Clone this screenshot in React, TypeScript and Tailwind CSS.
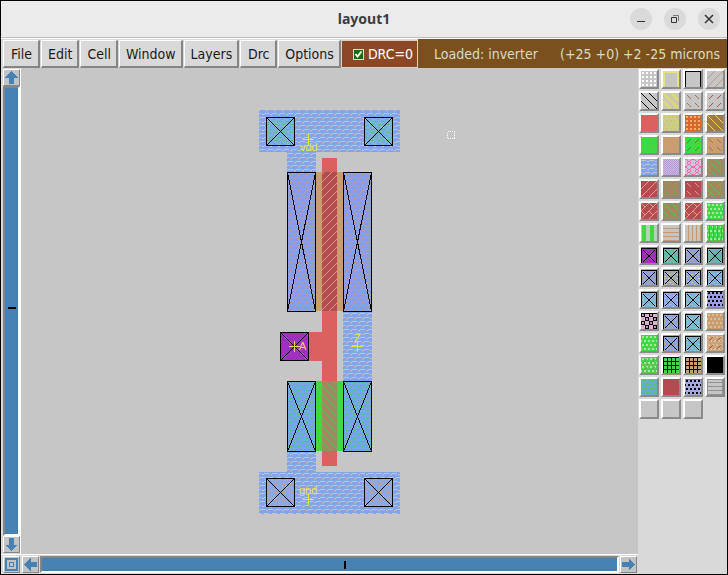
import type { ReactNode } from "react";

const MENUS = ["File", "Edit", "Cell", "Window", "Layers", "Drc", "Options"];

type Layer = { name: string; bg: string; fills?: string[]; box?: boolean; frame?: string; edge?: string; thick?: boolean };

const LAYERS: Layer[] = [
  { name: "Grid dots", bg: "#c6c6c6", fills: ["dots-white"] },
  { name: "Highlight", bg: "#c6c6c6", frame: "#e8e27c", thick: true },
  { name: "Outline", bg: "#c6c6c6", frame: "#000" },
  { name: "P select", bg: "#c6c6c6", fills: ["fwd-tan"] },

  { name: "Error", bg: "#c6c6c6", fills: ["back-black"] },
  { name: "N well hint", bg: "#c8c8b0", fills: ["back-khaki"] },
  { name: "Back dashes", bg: "#c6c6c6", fills: ["dash-back-brown"] },
  { name: "Forward dashes", bg: "#c6c6c6", fills: ["dash-fwd-red"] },

  { name: "Polysilicon", bg: "#db6060" },
  { name: "Poly 2", bg: "#cdcd85", fills: ["dots-khaki"] },
  { name: "Poly contact", bg: "#d8672a", fills: ["dots-peach"] },
  { name: "Poly resistor", bg: "#a07a45", fills: ["back-yellow"] },

  { name: "N diffusion", bg: "#42d843" },
  { name: "P diffusion", bg: "#c99d70" },
  { name: "N well contact", bg: "#42d843", fills: ["dash-fwd-brown"] },
  { name: "P well contact", bg: "#c99d70", fills: ["dash-back-brown"] },

  { name: "Metal 1", bg: "#82a5eb", fills: ["metal"] },
  { name: "Metal 2", bg: "#cdbbd3", fills: ["checker"] },
  { name: "Metal 3", bg: "#d8c0d0", fills: ["rings"] },
  { name: "N transistor", bg: "#a38662", fills: ["back-green"] },

  { name: "P transistor", bg: "#b54a52", fills: ["fwd-peach"] },
  { name: "N transistor high", bg: "#a38662", fills: ["dash-fwd-green"] },
  { name: "P transistor high", bg: "#b54a52", fills: ["dash-back-peach"] },
  { name: "N transistor low", bg: "#a38662", fills: ["back-green", "dash-fwd-green"] },

  { name: "P transistor low", bg: "#b54a52", fills: ["fwd-peach", "short-back-peach"] },
  { name: "N memory", bg: "#a38662", fills: ["back-green", "dash-fwd-green"] },
  { name: "P memory", bg: "#b54a52", fills: ["fwd-peach", "short-back-peach"] },
  { name: "N substrate", bg: "#42d843", fills: ["dots-mint"] },

  { name: "N stripes", bg: "#b4d3b4", fills: ["stripes-green"] },
  { name: "P rows", bg: "#c9c4be", fills: ["rows-tan"] },
  { name: "P columns", bg: "#c9c4be", fills: ["cols-tan"] },
  { name: "N substrate columns", bg: "#42d843", fills: ["dots-mint", "cols-brown"] },

  { name: "Poly metal contact", bg: "#a030b8", box: true, edge: "#c060d0" },
  { name: "N diffusion contact", bg: "#6db7b0", fills: ["flecks-green"], box: true, edge: "#68b890" },
  { name: "P diffusion contact", bg: "#8ea2d8", fills: ["flecks-tan"], box: true, edge: "#a8a0b8" },
  { name: "N substrate contact", bg: "#72aebb", fills: ["flecks-green"], box: true, edge: "#68b870" },

  { name: "P substrate contact", bg: "#8ea2d8", fills: ["flecks-tan"], box: true, edge: "#b8a890" },
  { name: "Buried contact", bg: "#9fa8b4", fills: ["flecks-tan", "flecks-yellow"], box: true, edge: "#d0a050" },
  { name: "Cap contact", bg: "#8ba7d8", fills: ["flecks-yellow"], box: true, edge: "#d8d080" },
  { name: "Well contact", bg: "#80aadb", fills: ["flecks-aqua"], box: true, edge: "#98d0c0" },

  { name: "Via N", bg: "#83b3dd", fills: ["flecks-aqua"], box: true, edge: "#80c8a0" },
  { name: "Via 1", bg: "#88a8ea", fills: ["flecks-light"], box: true, edge: "#a0b8e8" },
  { name: "Via 2", bg: "#80b3d8", fills: ["flecks-aqua"], box: true, edge: "#80d0a0" },
  { name: "Metal via", bg: "#9c9ce5", fills: ["dots-black"], edge: "#000" },

  { name: "Metal 3 via", bg: "#dfaed2", fills: ["blocks-black"], edge: "#000" },
  { name: "Via P", bg: "#8ea6df", fills: ["flecks-tan"], box: true, edge: "#c0b8a8" },
  { name: "Via substrate", bg: "#79b9d5", fills: ["flecks-aqua"], box: true, edge: "#80d8a0" },
  { name: "P substrate", bg: "#c99d70", fills: ["dots-sand"] },

  { name: "N field", bg: "#42d843", fills: ["dots-mint"] },
  { name: "P field contact", bg: "#86a3e3", fills: ["flecks-tan"], box: true, edge: "#b0a090" },
  { name: "N field contact", bg: "#79b5d3", fills: ["flecks-aqua"], box: true, edge: "#80c890" },
  { name: "P field", bg: "#cda37c", fills: ["dots-sand", "dash-fwd-brown"] },

  { name: "N field rail", bg: "#50cf4d", fills: ["dots-mint", "dash-fwd-tan"] },
  { name: "N mesh", bg: "#42d843", fills: ["mesh-black"], edge: "#000" },
  { name: "P mesh", bg: "#c99d70", fills: ["mesh-black"], edge: "#000" },
  { name: "Pad", bg: "#000" },

  { name: "Metal on N", bg: "#69a9d5", fills: ["metal-green"] },
  { name: "Fill poly", bg: "#b54a52" },
  { name: "Glass", bg: "#a4a6dd", fills: ["dots-black"], edge: "#70709a" },
  { name: "Lines", bg: "#c6c6c6", fills: ["rows-gray"], frame: "#929292" },

  { name: "Spare 1", bg: "#c6c6c6" },
  { name: "Spare 2", bg: "#c6c6c6" },
  { name: "Spare 3", bg: "#c6c6c6" },
];

function Tile({ id, w, h = w, children }: { id: string; w: number; h?: number; children: ReactNode }) {
  return (
    <pattern id={id} width={w} height={h} patternUnits="userSpaceOnUse">
      {children}
    </pattern>
  );
}

function Dots({ id, color }: { id: string; color: string }) {
  return (
    <Tile id={id} w={4}>
      <rect x="1" y="1" width="2" height="2" fill={color} />
    </Tile>
  );
}

function StaggeredDots({ id, color }: { id: string; color: string }) {
  return (
    <Tile id={id} w={8}>
      <path d="M1 1h2v2h-2zM5 1h2v2h-2zM3 5h2v2h-2zM7 5h1v2h-1zM0 5h1v2h-1z" fill={color} />
    </Tile>
  );
}

// One-pixel stair steps; the dashed form leaves out part of each run.
const steps = (size: number, forward: boolean, from: number, to: number) =>
  Array.from({ length: to - from }, (_, i) => {
    const x = from + i;
    const y = forward ? size - 1 - x : x;
    return `M${x} ${y}h1v1h-1z`;
  }).join("");

const CROSS = Array.from({ length: 12 }, (_, i) => `M${2 + i} ${3 + i}h1v1h-1zM${13 - i} ${3 + i}h1v1h-1z`).join("");

type DiagonalProps = { id: string; color: string; forward?: boolean; from?: number; to?: number; size?: number };

function Diagonal({ id, color, forward = false, size = 8, from = 0, to = size }: DiagonalProps) {
  return (
    <Tile id={id} w={size}>
      <path d={steps(size, forward, from, to)} fill={color} />
    </Tile>
  );
}

function Flecks({ id, color }: { id: string; color: string }) {
  return (
    <Tile id={id} w={8}>
      <path d="M0 1h2v1h-2zM5 1h3v1h-3zM2 4h3v1h-3zM6 5h2v1h-2zM1 7h2v1h-2z" fill={color} />
    </Tile>
  );
}

function Weave({ id, color }: { id: string; color: string }) {
  return (
    <Tile id={id} w={8}>
      <path d="M0 1h5v1h-5zM6 2h2v1h-2zM4 5h4v1h-4zM0 5h1v1h-1zM2 6h2v1h-2z" fill={color} />
    </Tile>
  );
}

function Stipples() {
  return (
    <svg width="0" height="0" className="absolute" aria-hidden="true">
      <defs>
        <Dots id="dots-white" color="#ffffff" />
        <StaggeredDots id="dots-khaki" color="#c8c87a" />
        <Dots id="dots-peach" color="#f5b070" />
        <StaggeredDots id="dots-mint" color="#a5e8a5" />
        <StaggeredDots id="dots-sand" color="#d8bc9c" />
        <StaggeredDots id="dots-black" color="#000000" />
        <Diagonal id="fwd-tan" color="#c09a78" forward />
        <Diagonal id="fwd-peach" color="#e0a080" forward />
        <Diagonal id="back-black" color="#000000" />
        <Diagonal id="back-yellow" color="#e8d858" />
        <Diagonal id="back-green" color="#68b848" />
        <Diagonal id="dash-back-brown" color="#a07058" from={2} to={6} />
        <Diagonal id="dash-back-peach" color="#e0a080" from={2} to={6} />
        <Diagonal id="short-back-peach" color="#e0a080" from={0} to={4} />
        <Diagonal id="dash-fwd-red" color="#b54a52" forward from={2} to={6} />
        <Diagonal id="dash-fwd-brown" color="#a85838" forward from={2} to={6} />
        <Diagonal id="dash-fwd-tan" color="#a08050" forward from={2} to={6} />
        <Diagonal id="dash-fwd-green" color="#58c040" forward from={2} to={6} />
        <Diagonal id="hatch-p" color="#d8a078" forward />
        <Diagonal id="hatch-n" color="#62bb48" />
        <Tile id="back-khaki" w={8}>
          <path d="M0 0h2l6 6v2h-2l-6-6z" fill="#dcd878" />
        </Tile>
        <Weave id="metal" color="#c3c5cc" />
        <Weave id="metal-green" color="#52c46c" />
        <Weave id="metal-tan" color="#bfa08c" />
        <Tile id="checker" w={2}>
          <path d="M0 0h1v1h-1zM1 1h1v1h-1z" fill="#b49ad0" />
        </Tile>
        <Tile id="rings" w={8}>
          <path
            d="M0 0h2v1h-2zM6 0h2v1h-2zM2 1h1v1h-1zM5 1h1v1h-1zM3 2h2v1h-2zM3 5h2v1h-2zM2 6h1v1h-1zM5 6h1v1h-1zM0 7h2v1h-2zM6 7h2v1h-2zM2 3h1v2h-1zM5 3h1v2h-1z"
            fill="#e868c0"
          />
        </Tile>
        <Tile id="stripes-green" w={8}>
          <path d="M1 0h4v8h-4z" fill="#42d843" />
        </Tile>
        <Tile id="rows-tan" w={4}>
          <path d="M0 3h4v1h-4z" fill="#bf9a78" />
        </Tile>
        <Tile id="rows-gray" w={4}>
          <path d="M0 3h4v1h-4z" fill="#929292" />
        </Tile>
        <Tile id="cols-tan" w={4}>
          <path d="M3 0h1v4h-1z" fill="#bf9a78" />
        </Tile>
        <Tile id="cols-brown" w={4}>
          <path d="M2 0h1v4h-1z" fill="#a08050" />
        </Tile>
        <Tile id="mesh-black" w={4}>
          <path d="M0 0h4v1h-4zM0 0h1v4h-1z" fill="#000" />
        </Tile>
        <Tile id="blocks-black" w={8}>
          <path d="M0 0h4v4h-4zM4 4h4v4h-4z" fill="#000" />
          <path d="M1 1h2v2h-2zM5 5h2v2h-2z" fill="#c090b4" />
        </Tile>
        <Flecks id="flecks-green" color="#55c27c" />
        <Flecks id="flecks-tan" color="#b8a294" />
        <Flecks id="flecks-yellow" color="#cfca90" />
        <Flecks id="flecks-aqua" color="#80d8c0" />
        <Flecks id="flecks-light" color="#b0c0ee" />
      </defs>
    </svg>
  );
}

function Swatch({ layer }: { layer: Layer }) {
  return (
    <button
      type="button"
      aria-label={layer.name}
      className="size-5 border-2 border-t-white border-l-white border-r-[#8a8a8a] border-b-[#8a8a8a] bg-white"
    >
      <svg viewBox="0 0 16 16" className="block size-4" shapeRendering="crispEdges" aria-hidden="true">
        <rect width="16" height="16" fill={layer.bg} />
        {layer.fills?.map((fill) => <rect key={fill} width="16" height="16" fill={`url(#${fill})`} />)}
        {layer.edge && <rect width="16" height="1" fill={layer.edge} />}
        {layer.box && <path d={`M0 16V1h16v15h-1V2H1v14z${CROSS}`} fill="#000" />}
        {layer.frame && <path d={layer.thick ? "M0 16V0h16v16h-2V2H2v14z" : "M0 16V0h16v16h-1V1H1v15z"} fill={layer.frame} />}
      </svg>
    </button>
  );
}

function Crossed({ x, y, w, h, fills }: { x: number; y: number; w: number; h: number; fills: string[] }) {
  return (
    <g>
      {fills.map((fill) => <rect key={fill} x={x} y={y} width={w} height={h} fill={fill} />)}
      <path
        d={`M${x + 0.5} ${y + 0.5}h${w - 1}v${h - 1}h${1 - w}zl${w - 1} ${h - 1}M${x + w - 0.5} ${y + 0.5}l${1 - w} ${h - 1}`}
        fill="none"
        stroke="#000"
      />
    </g>
  );
}

function Label({ x, y, tx, ty, text, color = "#e6e645" }: { x: number; y: number; tx: number; ty: number; text: string; color?: string }) {
  return (
    <g>
      <path d={`M${x - 5} ${y}h11v1h-11zM${x} ${y - 5}h1v11h-1z`} fill={color} />
      <text x={tx} y={ty} fill={color} className="font-['Liberation_Sans',sans-serif] text-[11px]">{text}</text>
    </g>
  );
}

function Layout() {
  const metal = ["#82a5eb", "url(#metal)"];
  return (
    <svg viewBox="21 68 617 486" className="block size-full" shapeRendering="crispEdges" role="img" aria-label="Inverter layout">
      {metal.map((fill) => (
        <path key={fill} d="M259 110h141v42h-84v20h-29v-20h-28zM343 311h29v70h-29zM287 451h29v21h84v42h-141v-42h28z" fill={fill} />
      ))}
      <path d="M315 172h29v139h-29z" fill="#c99d70" />
      <path d="M315 381h29v70h-29z" fill="#42d843" />
      <path d="M322 158h15v308h-15zM308 332h14v29h-14z" fill="#db6060" />
      <path d="M322 172h15v139h-15z" fill="#b54a52" />
      <path d="M322 172h15v139h-15z" fill="url(#hatch-p)" />
      <path d="M322 381h15v70h-15z" fill="#a38662" />
      <path d="M322 381h15v70h-15z" fill="url(#hatch-n)" />
      <Crossed x={266} y={117} w={29} h={29} fills={["#7ab2dc", "url(#flecks-green)"]} />
      <Crossed x={364} y={117} w={29} h={29} fills={["#7ab2dc", "url(#flecks-green)"]} />
      <Crossed x={287} y={172} w={29} h={140} fills={["#82a0e2", "url(#metal-tan)"]} />
      <Crossed x={343} y={172} w={29} h={140} fills={["#82a0e2", "url(#metal-tan)"]} />
      <Crossed x={280} y={332} w={29} h={29} fills={["#a030c0"]} />
      <Crossed x={287} y={381} w={29} h={71} fills={["#76a8e4", "url(#metal-green)"]} />
      <Crossed x={343} y={381} w={29} h={71} fills={["#76a8e4", "url(#metal-green)"]} />
      <Crossed x={266} y={478} w={29} h={29} fills={["#8fa9e0", "url(#flecks-tan)"]} />
      <Crossed x={364} y={478} w={29} h={29} fills={["#8fa9e0", "url(#flecks-tan)"]} />
      <Label x={308} y={139} tx={300} ty={151} text="vdd" />
      <Label x={308} y={499} tx={299} ty={494} text="gnd" />
      <Label x={294} y={346} tx={299} ty={350} text="A" color="#f0d060" />
      <Label x={357} y={346} tx={354} ty={342} text="Z" />
      <rect x="447.5" y="131.5" width="7" height="7" fill="none" stroke="#fff" strokeDasharray="1 1" />
    </svg>
  );
}

const ARROWS = {
  up: "M7 1l6 6h-4v6h-4v-6h-4z",
  down: "M7 13l6-6h-4v-6h-4v6h-4z",
  left: "M1 7l6-6v4h6v4h-6v4z",
  right: "M13 7l-6-6v4h-6v4h6v4z",
};

function ScrollButton({ label, children }: { label: string; children: ReactNode }) {
  return (
    <button
      type="button"
      aria-label={label}
      className="size-[17px] shrink-0 border border-t-white border-l-white border-r-[#858585] border-b-[#858585] bg-[#c3c3c3]"
    >
      <svg viewBox="0 0 14 14" className="block size-full" shapeRendering="crispEdges" aria-hidden="true" fill="#4682b4">
        {children}
      </svg>
    </button>
  );
}

function WindowButton({ label, children }: { label: string; children: ReactNode }) {
  return (
    <button type="button" aria-label={label} className="flex size-[22px] items-center justify-center rounded-full bg-[#dadada]">
      <svg viewBox="0 0 10 10" className="size-[10px]" fill="none" stroke="#333" aria-hidden="true">
        {children}
      </svg>
    </button>
  );
}

export default function App() {
  return (
    <div className="flex h-screen flex-col border border-black bg-[#d9d9d9] font-['DejaVu_Sans_Condensed','DejaVu_Sans',sans-serif] text-sm text-[#1a1a1a]">
      <Stipples />
      <header className="grid h-[37px] shrink-0 grid-cols-[1fr_auto_1fr] items-center border-b border-[#bdbdbd] bg-[#ebebeb]">
        <h1 className="col-start-2 font-['Noto_Sans',sans-serif] text-sm font-bold text-[#3d3d3d]">layout1</h1>
        <div className="flex justify-end gap-3 pr-[7px]">
          <WindowButton label="Minimize"><path d="M1 7.5h8" /></WindowButton>
          <WindowButton label="Restore">
            <path d="M1.5 3.5h5v5h-5z" />
            <path d="M3 1.5h5.500v5.500" stroke="#777" />
          </WindowButton>
          <WindowButton label="Close"><path d="M1 1l8 8M9 1l-8 8" strokeWidth="1.500" /></WindowButton>
        </div>
      </header>

      <div className="flex h-[30px] shrink-0 border-t border-white pl-0.5">
        <nav className="flex gap-px pt-px" aria-label="Main menu">
          {MENUS.map((menu) => (
            <button
              key={menu}
              type="button"
              className="min-w-[37px] border border-r-2 border-b-2 border-t-white border-l-white border-r-[#858585] border-b-[#858585] bg-[#d9d9d9] pr-[5px] pl-1.5"
            >
              {menu}
            </button>
          ))}
        </nav>
        <label className="mt-px flex items-center gap-1 border border-[#e0cfc4] bg-[#8b4726] pr-1 pl-[11px] whitespace-nowrap text-white">
          <span className="relative flex">
            <input type="checkbox" defaultChecked className="size-[11px] appearance-none border border-[#d8e0c0] bg-[#107010]" />
            <svg viewBox="0 0 11 11" className="pointer-events-none absolute inset-0 size-[11px]" fill="none" stroke="#fff" strokeWidth="2" aria-hidden="true">
              <path d="M2.500 5l2 2.500l4-5" />
            </svg>
          </span>
          DRC=0
        </label>
        <div className="flex flex-1 items-center justify-between bg-[#7a501c] pr-[7px] pl-4 whitespace-nowrap text-[#d8dcc4]" role="status">
          <span>Loaded: inverter</span>
          <span>(+25 +0) +2 -25 microns</span>
        </div>
      </div>

      <main className="flex min-h-0 flex-1">
        <div className="flex min-w-0 flex-1 flex-col">
          <div className="flex min-h-0 flex-1">
            <div className="flex w-5 shrink-0 flex-col items-start border-r border-white pt-px pb-px pl-0.5">
              <ScrollButton label="Scroll up"><path d={ARROWS.up} /></ScrollButton>
              <div className="flex w-[17px] flex-1 flex-col border-2 border-t-[#858585] border-l-[#858585] border-white bg-[#4682b4]">
                <div className="basis-[49%]" />
                <div className="h-0.5 w-2 self-center bg-black" />
              </div>
              <ScrollButton label="Scroll down"><path d={ARROWS.down} /></ScrollButton>
            </div>
            <div className="min-w-0 flex-1 bg-[#c6c6c6]">
              <Layout />
            </div>
          </div>
          <div className="flex h-5 shrink-0 items-center border-t border-white pr-px pl-0.5">
            <ScrollButton label="Fit view">
              <path d="M1 1h12v12h-12zM3 3v8h8v-8zM5 5h4v4h-4zM6 6v2h2v-2z" fillRule="evenodd" />
            </ScrollButton>
            <div className="w-0.5" />
            <ScrollButton label="Scroll left"><path d={ARROWS.left} /></ScrollButton>
            <div className="mx-px flex h-[17px] flex-1 items-center border-2 border-white border-t-[#858585] border-l-[#858585] bg-[#4682b4]">
              <div className="basis-[52.5%]" />
              <div className="h-2 w-0.5 bg-black" />
            </div>
            <ScrollButton label="Scroll right"><path d={ARROWS.right} /></ScrollButton>
          </div>
        </div>
        <aside className="grid shrink-0 grid-cols-4 content-start gap-0.5 pt-px pr-0.5 pl-px" aria-label="Layers">
          {LAYERS.map((layer) => <Swatch key={layer.name} layer={layer} />)}
        </aside>
      </main>
    </div>
  );
}
